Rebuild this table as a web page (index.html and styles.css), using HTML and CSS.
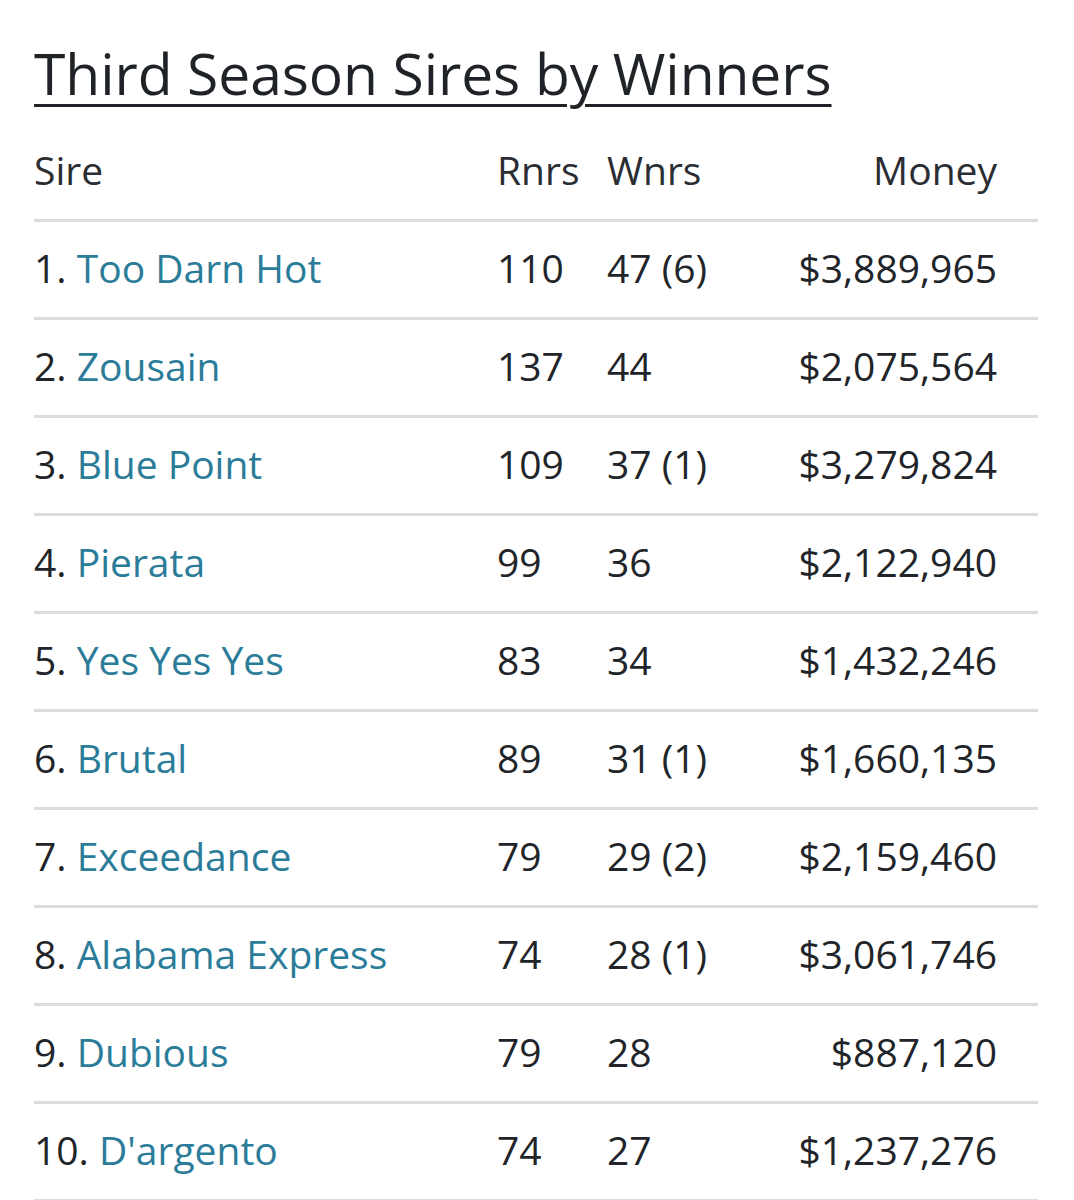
FILE: index.html
```html
<!DOCTYPE html>
<html>
<head>
<meta charset="utf-8">
<link rel="stylesheet" href="styles.css">
</head>
<body>
<div class="page">
  <h1 class="title">Third Season Sires by Winners</h1>
  <table class="sires">
    <thead>
      <tr><th class="c-sire">Sire</th><th class="c-r">Rnrs</th><th class="c-w">Wnrs</th><th class="c-m">Money</th></tr>
    </thead>
    <tbody>
      <tr><td class="c-sire">1. <a href="#">Too Darn Hot</a></td><td class="c-r">110</td><td class="c-w">47 (6)</td><td class="c-m">$3,889,965</td></tr>
      <tr><td class="c-sire">2. <a href="#">Zousain</a></td><td class="c-r">137</td><td class="c-w">44</td><td class="c-m">$2,075,564</td></tr>
      <tr><td class="c-sire">3. <a href="#">Blue Point</a></td><td class="c-r">109</td><td class="c-w">37 (1)</td><td class="c-m">$3,279,824</td></tr>
      <tr><td class="c-sire">4. <a href="#">Pierata</a></td><td class="c-r">99</td><td class="c-w">36</td><td class="c-m">$2,122,940</td></tr>
      <tr><td class="c-sire">5. <a href="#">Yes Yes Yes</a></td><td class="c-r">83</td><td class="c-w">34</td><td class="c-m">$1,432,246</td></tr>
      <tr><td class="c-sire">6. <a href="#">Brutal</a></td><td class="c-r">89</td><td class="c-w">31 (1)</td><td class="c-m">$1,660,135</td></tr>
      <tr><td class="c-sire">7. <a href="#">Exceedance</a></td><td class="c-r">79</td><td class="c-w">29 (2)</td><td class="c-m">$2,159,460</td></tr>
      <tr><td class="c-sire">8. <a href="#">Alabama Express</a></td><td class="c-r">74</td><td class="c-w">28 (1)</td><td class="c-m">$3,061,746</td></tr>
      <tr><td class="c-sire">9. <a href="#">Dubious</a></td><td class="c-r">79</td><td class="c-w">28</td><td class="c-m">$887,120</td></tr>
      <tr><td class="c-sire">10. <a href="#">D'argento</a></td><td class="c-r">74</td><td class="c-w">27</td><td class="c-m">$1,237,276</td></tr>
    </tbody>
  </table>
</div>
</body>
</html>
```
FILE: styles.css
```css
html, body {
  margin: 0;
  padding: 0;
  background: #ffffff;
}
.page {
  padding: 0 36px 0 34px;
  font-family: "Open Sans", "Noto Sans", sans-serif;
  color: #212529;
}
.title {
  margin: 0;
  padding-top: 41px;
  height: 83px;
  font-size: 57px;
  line-height: 64px;
  font-weight: 400;
  color: #1f2328;
  text-decoration: underline;
  text-decoration-thickness: 3px;
  text-underline-offset: 9px;
  letter-spacing: -0.1px;
  white-space: nowrap;
}
.sires {
  width: 1004px;
  border-collapse: collapse;
  font-size: 39px;
  table-layout: fixed;
}
.sires th, .sires td {
  height: 91px;
  padding: 0 0 4px 0;
  font-weight: 400;
  text-align: left;
  vertical-align: middle;
  border-bottom: 3px solid #dcdcdc;
  white-space: nowrap;
}
.sires th {
  color: #2a2e33;
}
.c-sire { width: 463px; }
.c-r { width: 110px; }
.c-w { width: 190px; }
.sires .c-m {
  text-align: right;
  padding-right: 41px;
}
.sires a {
  color: #2b7c99;
  text-decoration: none;
}
```
